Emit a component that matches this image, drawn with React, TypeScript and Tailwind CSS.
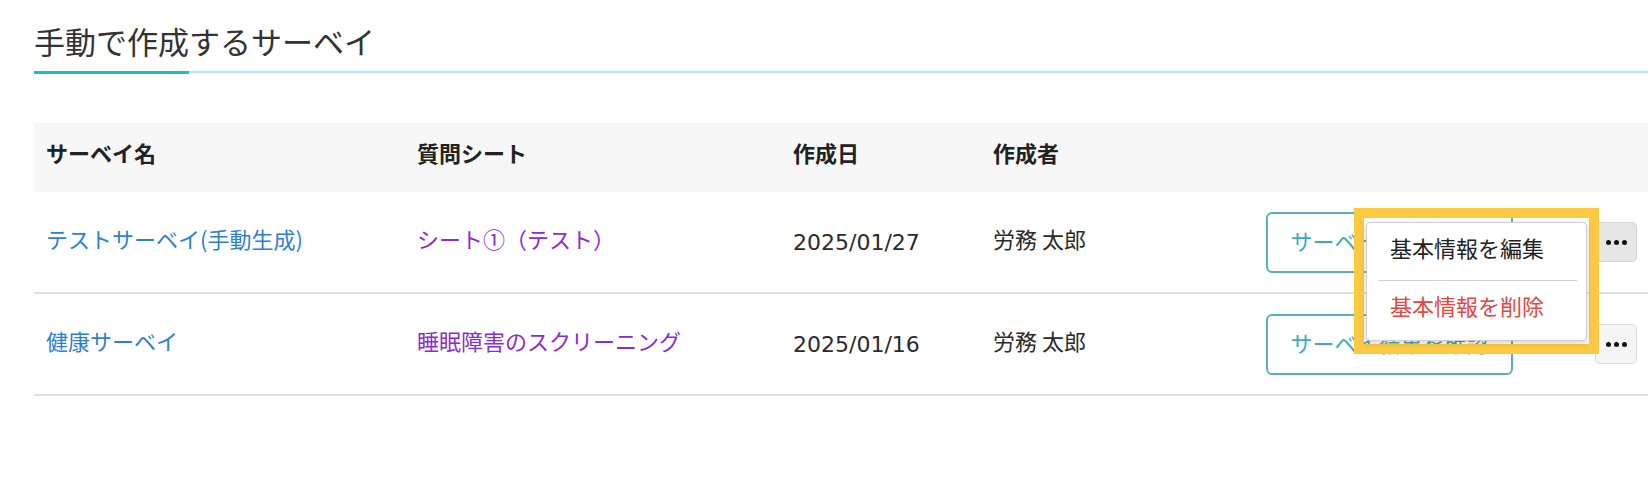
import React from 'react';

const rows = [
  { id: 'manual-test', name: 'テストサーベイ(手動生成)', sheet: 'シート①（テスト）', date: '2025/01/27', author: '労務 太郎', open: true },
  { id: 'health', name: '健康サーベイ', sheet: '睡眠障害のスクリーニング', date: '2025/01/16', author: '労務 太郎', open: false },
];

const Dots: React.FC = () => (
  <span className="flex items-center gap-[3px]">
    <span className="h-[5px] w-[5px] rounded-full bg-[#111]" />
    <span className="h-[5px] w-[5px] rounded-full bg-[#111]" />
    <span className="h-[5px] w-[5px] rounded-full bg-[#111]" />
  </span>
);

const App: React.FC = () => {
  return (
    <div className="min-h-screen bg-white font-['Noto_Sans_CJK_JP','Noto_Sans',sans-serif] text-[#333]">
      <div className="pl-[34px] pt-[19px]">
        {/* Section title */}
        <h2 className="text-[31px] leading-[44px] text-[#333]">手動で作成するサーベイ</h2>
        <div className="mt-[8px] flex items-start">
          <div className="h-[3px] w-[155px] bg-[#1fb8d3]" />
          <div className="h-[2px] flex-1 bg-[#aeeaf3]" />
        </div>

        {/* Survey table */}
        <div className="mt-[49px] text-[22px]">
          <div className="flex h-[69px] items-center bg-[#f7f7f7] pb-[10px] font-bold text-[#222]">
            <div className="w-[371px] pl-[12px]">サーベイ名</div>
            <div className="w-[376px] pl-[12px]">質問シート</div>
            <div className="w-[200px] pl-[12px]">作成日</div>
            <div className="flex-1 pl-[12px]">作成者</div>
          </div>

          {rows.map((row) => (
            <div key={row.id} className="flex h-[102px] items-center border-b-2 border-[#dedede]">
              <div className="w-[371px] pb-[8px] pl-[12px] text-[#2d7fd4]">{row.name}</div>
              <div className="w-[376px] pb-[8px] pl-[12px] text-[#8a2bd6]">{row.sheet}</div>
              <div className="w-[200px] pl-[12px] pt-[1px] font-['DejaVu_Sans','Noto_Sans_CJK_JP',sans-serif] text-[22px] text-[#2b2b2b]">
                {row.date}
              </div>
              <div className="flex-1 pb-[8px] pl-[12px] text-[#2b2b2b]">{row.author}</div>
              <div className="flex items-center pr-[11px]">
                <button className="h-[61px] w-[247px] rounded-[6px] border-2 border-[#55b1c0] bg-white pb-[4px] text-[#3eaabf]">
                  サーベイ結果を確認
                </button>
                <div className="relative ml-[82px]">
                  <button
                    className={
                      row.open
                        ? 'flex h-[40px] w-[42px] items-center justify-center rounded-[5px] border border-[#d4d4d4] bg-[#e6e6e6]'
                        : 'flex h-[40px] w-[42px] items-center justify-center rounded-[5px] border border-[#d9d9d9] bg-[#f5f5f5]'
                    }
                  >
                    <Dots />
                  </button>

                  {row.open && (
                    <div className="absolute right-[38px] top-[-14px] z-10 h-[146px] w-[245px] border-[10px] border-[#fdc940] px-[2px] pb-[3px] pt-[4px]">
                      <div className="h-[119px] w-[221px] rounded-[4px] border border-[#cfcfcf] bg-white shadow-[0_2px_6px_rgba(0,0,0,0.18)]">
                        <div className="flex h-[52px] items-center pb-[4px] pl-[23px] text-[#222]">基本情報を編集</div>
                        <div className="ml-[11px] mr-[9px] mt-[5px] h-px bg-[#d0d0d0]" />
                        <div className="flex h-[52px] items-center pb-[4px] pl-[23px] text-[#e8453c]">基本情報を削除</div>
                      </div>
                    </div>
                  )}
                </div>
              </div>
            </div>
          ))}
        </div>
      </div>
    </div>
  );
};

export default App;
